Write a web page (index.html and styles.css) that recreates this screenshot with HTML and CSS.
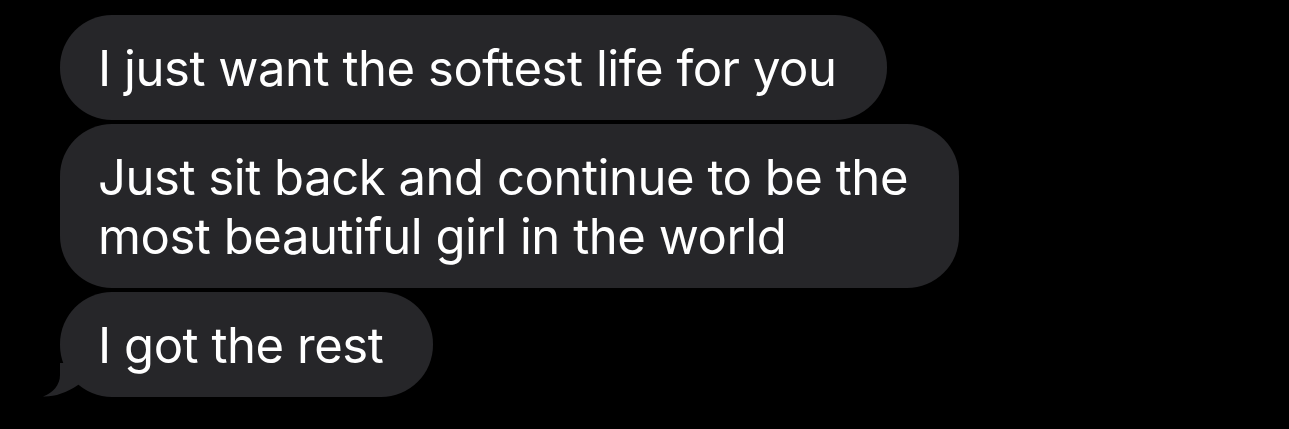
FILE: index.html
```html
<!DOCTYPE html>
<html lang="en">
<head>
  <meta charset="UTF-8">
  <meta name="viewport" content="width=device-width, initial-scale=1.0">
  <title>Messages</title>
  <link rel="stylesheet" href="styles.css">
</head>

<body>
  <div class="thread">
    <div class="bubble">I just want the softest life for you</div>
    <div class="bubble">Just sit back and continue to be the most beautiful girl in the world</div>
    <div class="bubble last">
      I got the rest
      <svg class="tail" width="40" height="34" viewBox="0 0 40 34">
        <path d="M17 0 L17 12 C17 22 10 30 0 33.5 C11 34 23 30 35 22 L40 18 L40 0 Z" fill="#262629"/>
      </svg>
    </div>
  </div>
</body>
</html>
```

FILE: styles.css
```css
* {
  box-sizing: border-box;
  margin: 0;
  padding: 0;
}

body {
  background: #000;
  font-family: Inter, 'Noto Sans', sans-serif;
  color: #fff;
}

.thread {
  display: flex;
  flex-direction: column;
  align-items: flex-start;
  gap: 4px;
  padding: 15px 0 0 60px;
}

.bubble {
  position: relative;
  background: #262629;
  border-radius: 52px;
  padding: 24px 50px 22px 38px;
  max-width: 899px;
  font-size: 49px;
  line-height: 59px;
  letter-spacing: -0.45px;
}

/* little hook on the last received message */
.tail {
  position: absolute;
  left: -17px;
  bottom: 0;
}
```
